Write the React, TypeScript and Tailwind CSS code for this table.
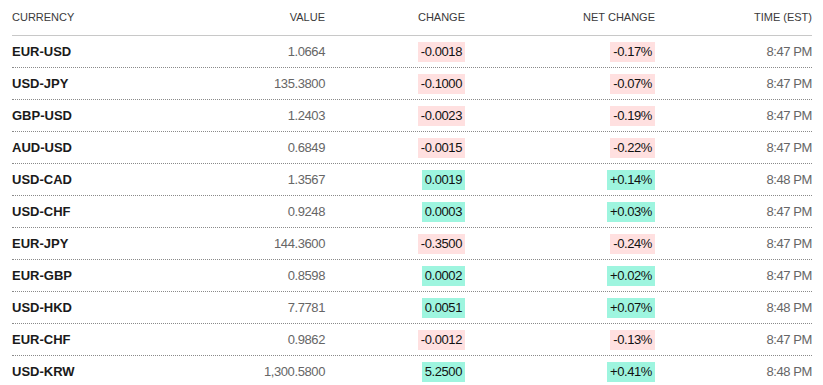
import React from 'react';

type Rate = {
  pair: string;
  value: string;
  change: string;
  netChange: string;
  time: string;
};

const RATES: Rate[] = [
  { pair: 'EUR-USD', value: '1.0664', change: '-0.0018', netChange: '-0.17%', time: '8:47 PM' },
  { pair: 'USD-JPY', value: '135.3800', change: '-0.1000', netChange: '-0.07%', time: '8:47 PM' },
  { pair: 'GBP-USD', value: '1.2403', change: '-0.0023', netChange: '-0.19%', time: '8:47 PM' },
  { pair: 'AUD-USD', value: '0.6849', change: '-0.0015', netChange: '-0.22%', time: '8:47 PM' },
  { pair: 'USD-CAD', value: '1.3567', change: '0.0019', netChange: '+0.14%', time: '8:48 PM' },
  { pair: 'USD-CHF', value: '0.9248', change: '0.0003', netChange: '+0.03%', time: '8:47 PM' },
  { pair: 'EUR-JPY', value: '144.3600', change: '-0.3500', netChange: '-0.24%', time: '8:47 PM' },
  { pair: 'EUR-GBP', value: '0.8598', change: '0.0002', netChange: '+0.02%', time: '8:47 PM' },
  { pair: 'USD-HKD', value: '7.7781', change: '0.0051', netChange: '+0.07%', time: '8:48 PM' },
  { pair: 'EUR-CHF', value: '0.9862', change: '-0.0012', netChange: '-0.13%', time: '8:47 PM' },
  { pair: 'USD-KRW', value: '1,300.5800', change: '5.2500', netChange: '+0.41%', time: '8:48 PM' },
];

const GRID = 'grid grid-cols-[150px_163px_140px_190px_157px]';

const Badge = ({ text }: { text: string }) => {
  const down = text.startsWith('-');
  return (
    <span
      className={`inline-block px-[3px] leading-5 text-[#111] ${
        down ? 'bg-[#ffe0e0]' : 'bg-[#9ef5df]'
      }`}
    >
      {text}
    </span>
  );
};

const App = () => {
  return (
    <div className="bg-white w-[823px] h-[385px] overflow-hidden px-3 font-['Liberation_Sans',Arial,sans-serif]">
      <div className="w-[800px]">
        <div className={`${GRID} h-[36px] items-center border-b border-[#c8c8c8] text-[11px] text-[#3a3a3a] uppercase`}>
          <div>Currency</div>
          <div className="text-right">Value</div>
          <div className="text-right">Change</div>
          <div className="text-right">Net Change</div>
          <div className="text-right">Time (EST)</div>
        </div>

        {RATES.map((rate, i) => (
          <div
            key={rate.pair}
            className={`${GRID} h-[32px] items-center text-[13px] tracking-[-0.4px] ${
              i < RATES.length - 1 ? 'border-b border-dotted border-[#8a8a8a]' : ''
            }`}
          >
            <div className="font-bold text-[#1a1a1a] tracking-normal">{rate.pair}</div>
            <div className="text-right text-[#666]">{rate.value}</div>
            <div className="text-right">
              <Badge text={rate.change} />
            </div>
            <div className="text-right">
              <Badge text={rate.netChange} />
            </div>
            <div className="text-right text-[#666]">{rate.time}</div>
          </div>
        ))}
      </div>
    </div>
  );
};

export default App;
